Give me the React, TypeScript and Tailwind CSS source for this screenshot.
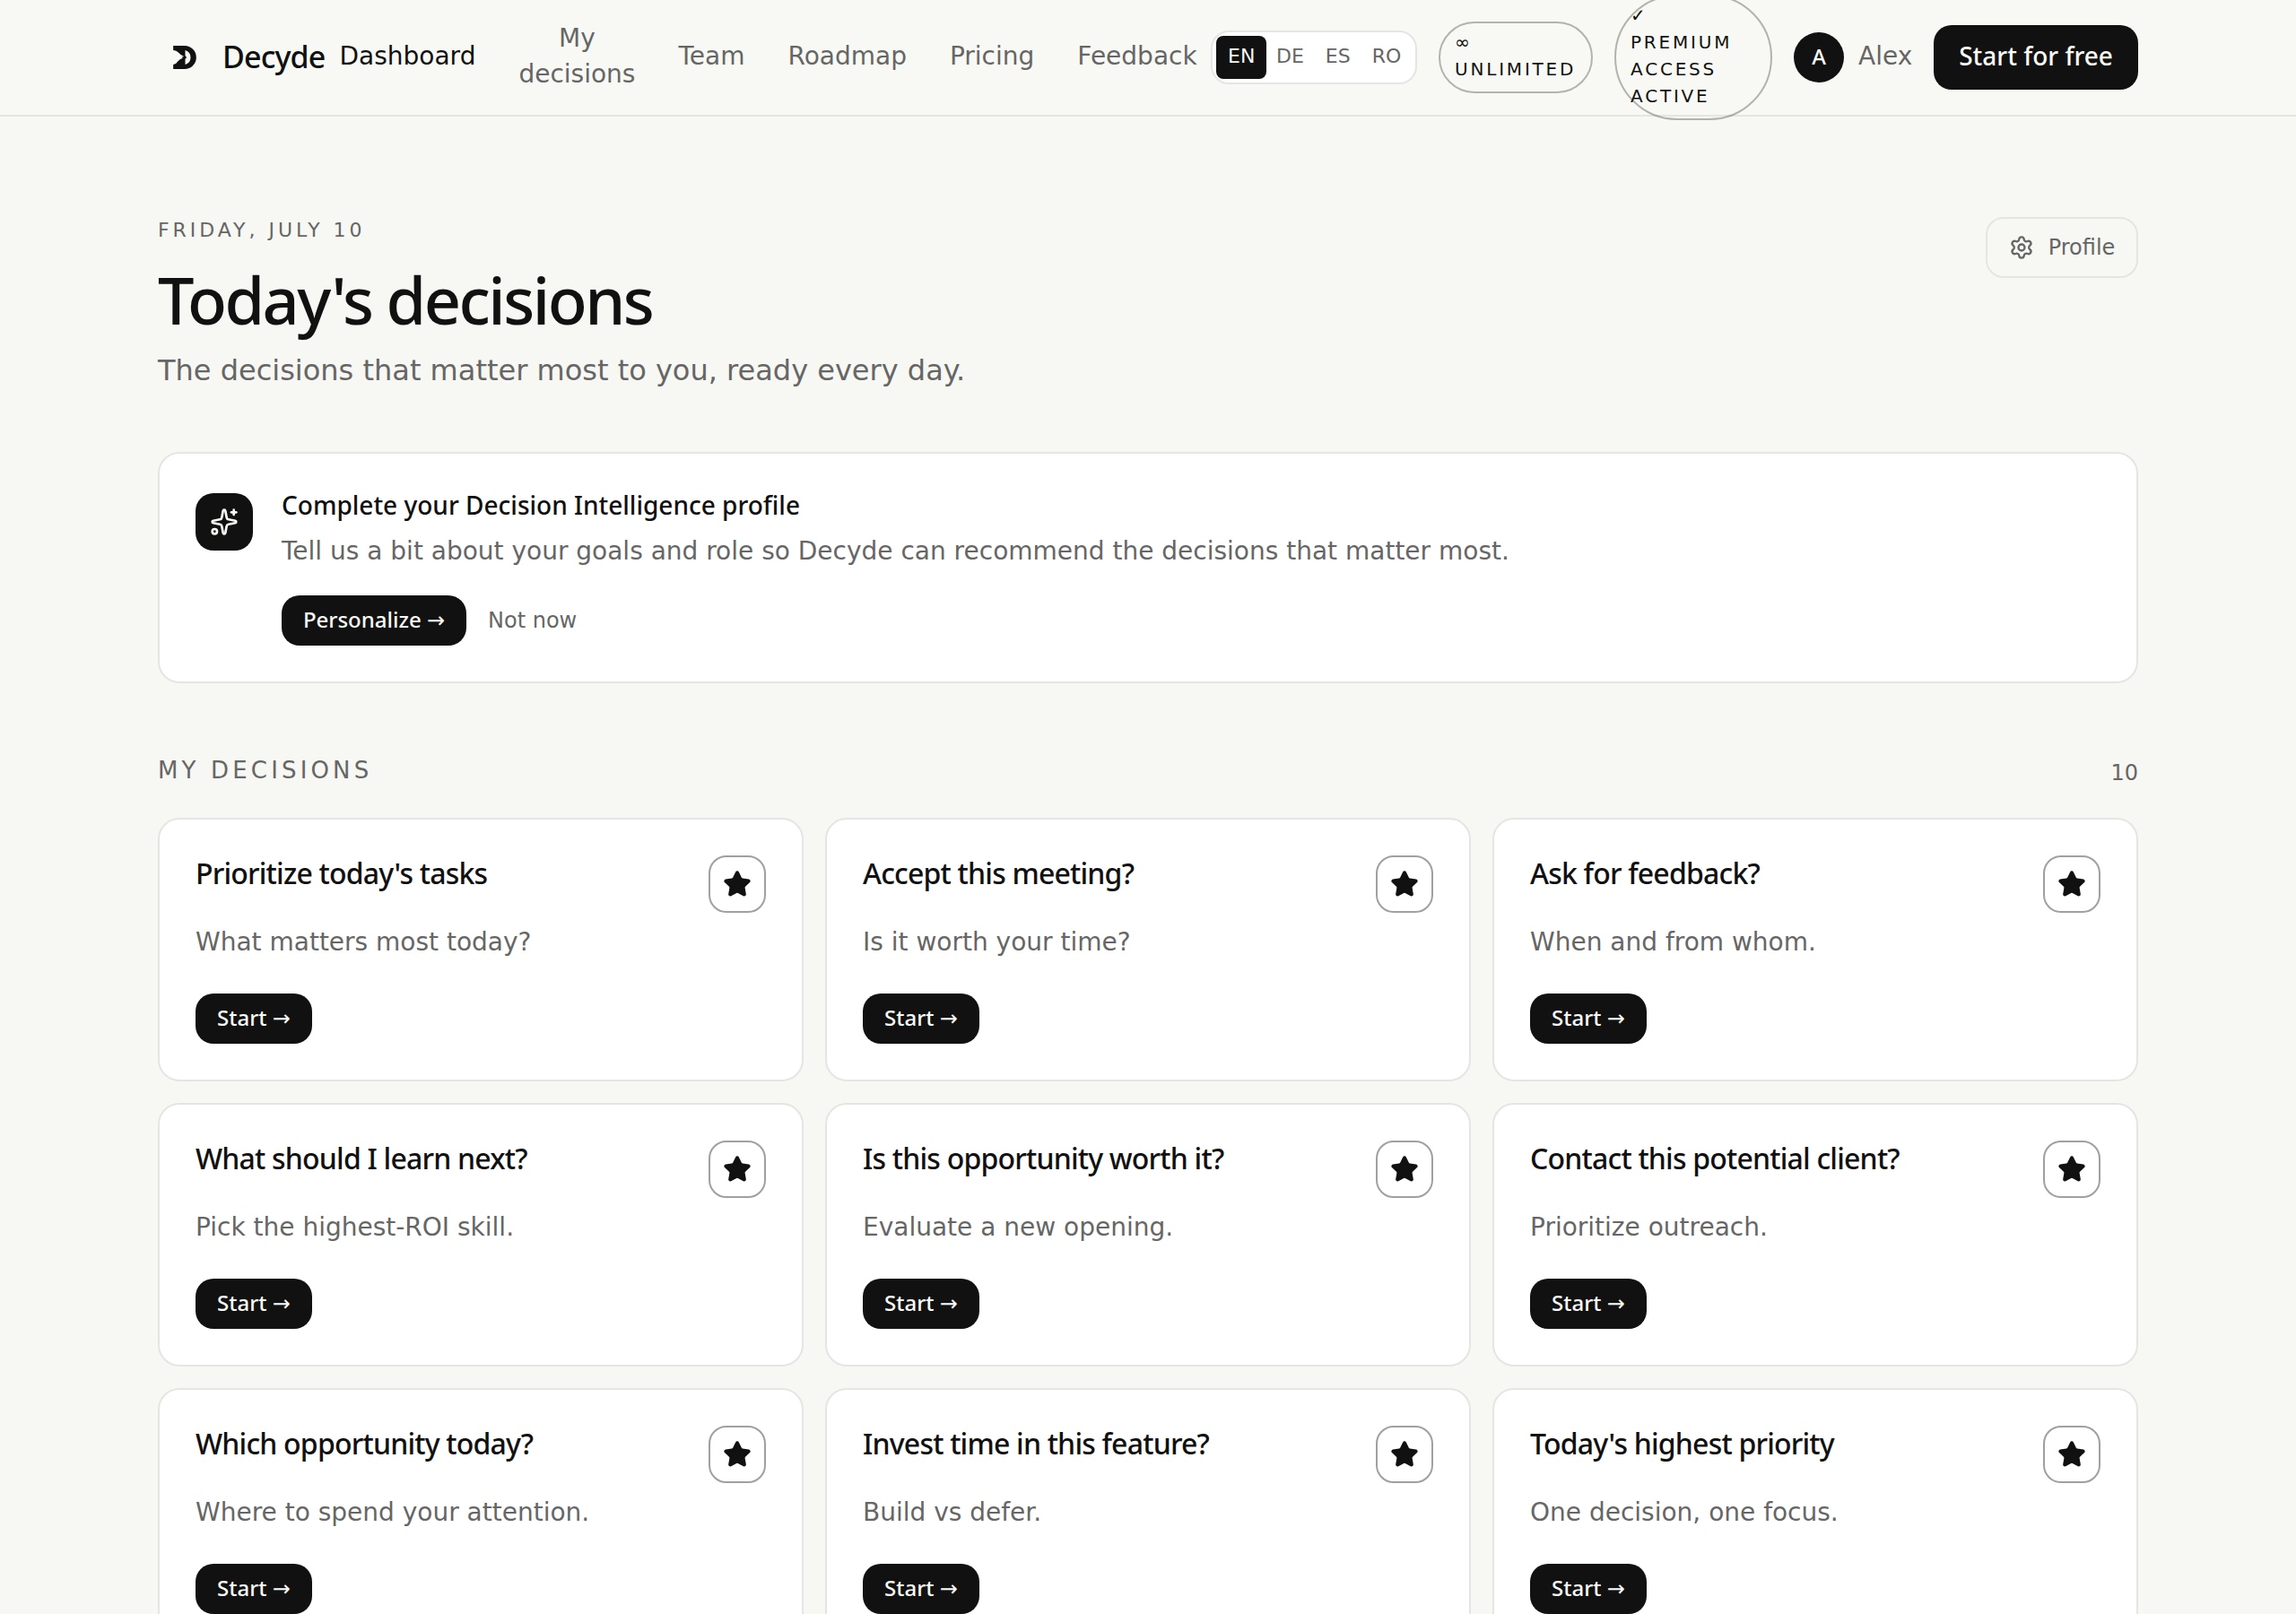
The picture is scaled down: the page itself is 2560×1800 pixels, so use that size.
import { Settings, Sparkles, Star } from "lucide-react";

const sans = "font-['DejaVu_Sans',sans-serif]";
const medium = "font-['Noto_Sans','DejaVu_Sans',sans-serif] font-medium";

const nav = ["Team", "Roadmap", "Pricing", "Feedback"];
const decisions = [
  ["Prioritize today's tasks", "What matters most today?"],
  ["Accept this meeting?", "Is it worth your time?"],
  ["Ask for feedback?", "When and from whom."],
  ["What should I learn next?", "Pick the highest-ROI skill."],
  ["Is this opportunity worth it?", "Evaluate a new opening."],
  ["Contact this potential client?", "Prioritize outreach."],
  ["Which opportunity today?", "Where to spend your attention."],
  ["Invest time in this feature?", "Build vs defer."],
  ["Today's highest priority", "One decision, one focus."],
];

function Logo() {
  return (
    <svg viewBox="52 61 77 78" className="h-[26px] w-[26px]" fill="#111" fillRule="evenodd">
      <path d="M52 61H90A39 39 0 0 1 90 139H52V124Q63 122 68 113Q73 105 84 102L80 99L88 97Q76 92 70 84Q63 76 52 76ZM92 76A25 25 0 0 1 92 124V105L97 100L92 95Z" />
    </svg>
  );
}

function Header() {
  return (
    <header className="flex h-[130px] justify-center border-b-2 border-[#e5e5e3] bg-[#f8f9f4]">
      <div className="flex h-32 w-[2208px] items-center">
        <div className="flex w-[202.5px] shrink-0 items-center pl-[17px]">
          <Logo />
          <span className={`ml-[29px] pb-[2px] text-[34px] leading-[48px] tracking-[-0.025em] ${medium}`}>Decyde</span>
        </div>
        <nav className="flex w-[957px] shrink-0 items-center gap-12 pb-[2px] text-[28px] leading-10 text-[#666]">
          <span className="text-[#111]">Dashboard</span>
          <span className="text-center">My<br />decisions</span>
          {nav.map((n) => (
            <span key={n}>{n}</span>
          ))}
        </nav>
        <div className="ml-auto flex shrink-0 items-center">
          <div className="flex w-[230px] rounded-[20px] border-2 border-[#e5e5e3] bg-white p-1 text-[22px] leading-8 text-[#666]">
            <span className="w-14 shrink-0 rounded-lg bg-[#111] pt-[7px] pb-[9px] pl-[13px] text-[#f8f9f4]">EN</span>
            <span className="pt-[7px] pr-3 pl-[11px]">DE</span>
            <span className="px-3 pt-[7px]">ES</span>
            <span className="pt-[7px] pl-3">RO</span>
          </div>
          <div className="ml-6 w-[172px] rounded-full border-2 border-[#111]/30 px-4 pt-[6px] pb-[10px] text-[20px] leading-[30px] tracking-[0.14em]">
            ∞<br />UNLIMITED
          </div>
          <div className="ml-6 w-[176px] rounded-full border-2 border-[#111]/30 px-4 pt-[6px] pb-[10px] text-[20px] leading-[30px] tracking-[0.14em]">
            ✓<br />PREMIUM<br />ACCESS<br />ACTIVE
          </div>
          <div className={`ml-6 flex size-14 items-center justify-center rounded-full bg-[#111] pb-[2px] text-[24px] text-[#f8f9f4] ${medium}`}>A</div>
          <span className="ml-4 w-[60px] pb-[2px] text-[28px] leading-10 text-[#666]">Alex</span>
          <button className={`ml-6 h-[72px] w-[228px] rounded-[20px] bg-[#111] pb-[5px] text-[28px] text-[#f8f9f4] ${medium}`}>
            Start for free
          </button>
        </div>
      </div>
    </header>
  );
}

function Card({ title, text }: { title: string; text: string }) {
  return (
    <article className="h-[294px] rounded-[24px] border-2 border-[#e5e5e3] bg-white p-10">
      <div className="flex h-[77px] items-start justify-between">
        <h3 className={`text-[32px] leading-[40px] tracking-[-0.025em] ${medium}`}>{title}</h3>
        <button className="flex size-16 items-center justify-center rounded-[20px] border-2 border-[#111]/40">
          <Star size={32} fill="#111" color="#111" />
        </button>
      </div>
      <p className="text-[28px] leading-[40px] text-[#666]">{text}</p>
      <button className={`mt-[37px] h-14 w-[130px] rounded-[20px] bg-[#111] pb-[3px] text-[24px] text-[#f8f9f4] ${medium}`}>Start →</button>
    </article>
  );
}

export default function App() {
  return (
    <div className={`h-[1800px] overflow-hidden bg-[#f7f7f3] text-[#111] ${sans}`}>
      <Header />
      <main className="mx-auto w-[2208px]">
        <div className="flex items-start justify-between pt-28">
          <div>
            <p className="-mt-[1px] text-[22px] leading-[32px] tracking-[0.18em] text-[#666]">FRIDAY, JULY 10</p>
            <h1 className={`mt-[16px] text-[72px] leading-[90px] tracking-[-0.035em] ${medium}`}>Today's decisions</h1>
            <p className="mt-[10px] text-[32px] leading-[48px] text-[#666]">The decisions that matter most to you, ready every day.</p>
          </div>
          <button className="flex h-[68px] w-[170px] items-center justify-center gap-4 rounded-[20px] border-2 border-[#e5e5e3] text-[24px] text-[#666]">
            <Settings size={28} strokeWidth={2} />
            Profile
          </button>
        </div>
        <section className="mt-[67px] flex h-[258px] rounded-[24px] border-2 border-[#e5e5e3] bg-white p-10">
          <div className="mt-1 flex size-16 shrink-0 items-center justify-center rounded-[20px] bg-[#111] text-[#f8f9f4]">
            <Sparkles size={32} />
          </div>
          <div className="ml-8">
            <h2 className={`-mt-[3px] text-[28px] leading-[40px] ${medium}`}>Complete your Decision Intelligence profile</h2>
            <p className="mt-[9px] text-[28px] leading-[46px] text-[#666]">
              Tell us a bit about your goals and role so Decyde can recommend the decisions that matter most.
            </p>
            <div className="mt-[26px] flex items-center gap-6">
              <button className={`h-14 w-[206px] rounded-[20px] bg-[#111] pb-[3px] text-[24px] text-[#f8f9f4] ${medium}`}>Personalize →</button>
              <button className="text-[24px] text-[#666]">Not now</button>
            </div>
          </div>
        </section>
        <div className="mt-[77px] flex h-[73px] items-start justify-between text-[#666]">
          <h2 className="text-[26px] leading-[40px] tracking-[0.16em]">MY DECISIONS</h2>
          <span className="mt-[3px] text-[24px] leading-[40px]">10</span>
        </div>
        <div className="grid grid-cols-3 gap-6">
          {decisions.map(([title, text]) => (
            <Card key={title} title={title} text={text} />
          ))}
        </div>
      </main>
    </div>
  );
}
